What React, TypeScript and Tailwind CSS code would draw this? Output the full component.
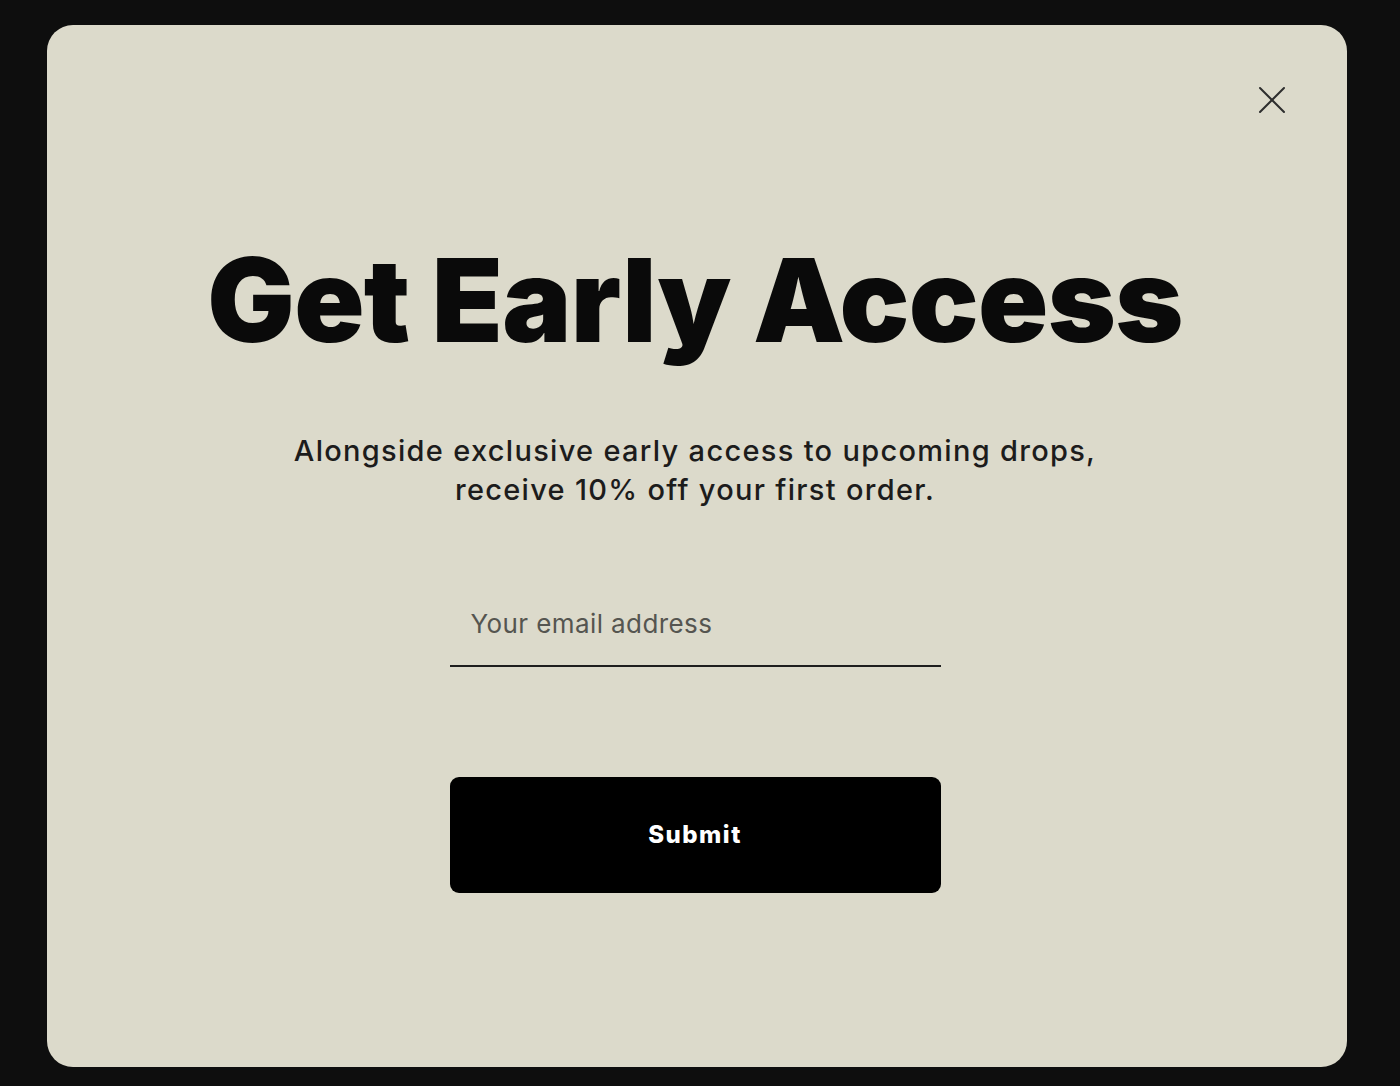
import React from "react";

export default function App() {
  return (
    <div
      className="w-[1400px] h-[1086px] bg-[#0e0e0e] pt-[25px] pl-[47px] overflow-hidden"
      style={{ fontFamily: "Inter, 'Liberation Sans', Arial, sans-serif" }}
    >
      <div className="relative w-[1300px] h-[1042px] rounded-[26px] bg-[#dcdacb] flex flex-col items-center">
        <button
          aria-label="Close"
          className="absolute left-[1211px] top-[61px] w-[28px] h-[28px] flex items-center justify-center text-[#2e2e2e]"
        >
          <svg width="28" height="28" viewBox="0 0 28 28" fill="none" stroke="currentColor" strokeWidth="2" strokeLinecap="round">
            <path d="M2 2 L26 26" />
            <path d="M26 2 L2 26" />
          </svg>
        </button>

        <h1 className="mt-[217px] mr-[4px] text-[116px] leading-[116px] font-black tracking-[-0.7px] text-[#0a0a0a] whitespace-nowrap">
          Get Early Access
        </h1>

        <p className="mt-[73px] mr-[4px] text-[29px] leading-[39px] font-medium tracking-[1.3px] text-[#1c1c1c] text-center whitespace-nowrap">
          Alongside exclusive early access to upcoming drops,
          <br />
          receive 10% off your first order.
        </p>

        <div className="mt-[100px] mr-[4px] w-[491px] border-b-2 border-[#1e1e1e] pl-[21px] pb-[26px]">
          <span className="text-[26px] leading-[30px] font-normal tracking-[0.4px] text-[#555550]">Your email address</span>
        </div>

        <button className="mt-[110px] mr-[4px] w-[491px] h-[116px] rounded-[9px] bg-black text-white text-[24px] font-extrabold tracking-[1.5px]">
          Submit
        </button>
      </div>
    </div>
  );
}
